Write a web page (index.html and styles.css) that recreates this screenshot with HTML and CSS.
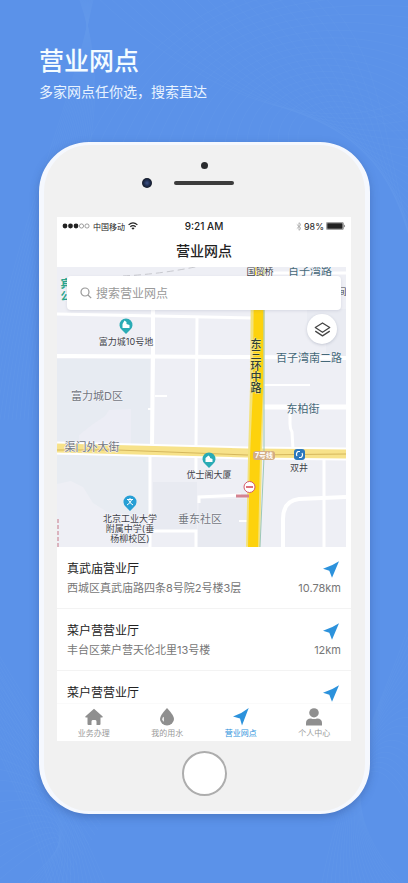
FILE: index.html
```html
<!DOCTYPE html>
<html lang="zh-CN">
<head>
  <meta charset="UTF-8">
  <meta name="viewport" content="width=device-width, initial-scale=1.0">
  <title>营业网点</title>
  <link rel="stylesheet" href="styles.css">
</head>
<body>
  <svg class="backdrop" viewBox="0 0 408 883" preserveAspectRatio="xMidYMid slice" aria-hidden="true">
    <g id="backdrop-lines"></g>
  </svg>

  <main class="hero-section">
    <h1 class="hero-title">营业网点</h1>
    <p class="hero-description">多家网点任你选，搜索直达</p>

    <div class="phone">
      <div class="phone-top">
        <span class="phone-sensor"></span>
        <span class="phone-camera"></span>
        <span class="phone-speaker"></span>
      </div>

      <div class="screen">
        <div class="status-bar">
          <div class="status-left">
            <svg width="28" height="6" viewBox="0 0 28 6">
              <g fill="#222"><circle cx="3" cy="3" r="2.4"/><circle cx="8.5" cy="3" r="2.4"/><circle cx="14" cy="3" r="2.4"/></g>
              <g fill="none" stroke="#777" stroke-width=".7"><circle cx="19.5" cy="3" r="2.1"/><circle cx="25" cy="3" r="2.1"/></g>
            </svg>
            <span class="carrier">中国移动</span>
            <svg width="10" height="8" viewBox="0 0 10 8" fill="none" stroke="#222" stroke-width="1.2">
              <path d="M.6 2.9Q5-1.2 9.4 2.9M2.3 4.8Q5 2.3 7.7 4.8"/>
              <path d="M5 7.8 3.4 6.1Q5 4.8 6.6 6.1z" fill="#222" stroke="none"/>
            </svg>
          </div>
          <span class="status-time">9:21 AM</span>
          <div class="status-right">
            <svg width="6" height="9" viewBox="0 0 6 9" fill="none" stroke="#999" stroke-width=".7">
              <path d="M.8 2.4 5 6.4 3 8.3V.7L5 2.6.8 6.6"/>
            </svg>
            <span>98%</span>
            <svg width="20" height="8" viewBox="0 0 20 8">
              <rect x=".4" y=".4" width="17" height="7.2" rx="1" fill="none" stroke="#555" stroke-width=".6"/>
              <rect x="1.2" y="1.2" width="15.4" height="5.6" fill="#222"/>
              <path d="M18.4 2.6q1.4 1.4 0 2.8z" fill="#222"/>
            </svg>
          </div>
        </div>

        <h2 class="screen-title">营业网点</h2>

        <div class="map">
          <svg class="map-canvas" viewBox="0 0 289 280" preserveAspectRatio="xMidYMid slice">
            <!-- blocks -->
            <rect width="289" height="280" fill="#eeeff5"/>
            <path d="M0 92h93v87H0z" fill="#e7ebf2"/>
            <path d="M22 168l14-11 12-8 4-6 22-1v36H22z" fill="#ecedf5"/>
            <path d="M0 188h92v60l-40-2-16-10-10-16-12-6-14 3z" fill="#e8ecf2"/>
            <path d="M96 215h44v48H96zM142 232h48v48h-50z" fill="#e8eaf1"/>
            <path d="M250 42h39v48h-20V60h-19z" fill="#e9ebf2"/>

            <!-- small roads -->
            <g fill="none" stroke="#fff" stroke-width="3">
              <path d="M0 47 196 51"/>
              <path d="M0 89 196 90 289 91" stroke-width="4"/>
              <path d="M96 40v50l-1 90" stroke-width="4"/>
              <path d="M93 186v94M140 50l-1 130v30"/>
              <path d="M98 129h12M91 142h5M206 118h47M182 254h9" stroke-width="2"/>
              <path d="M206 140h83" stroke-width="5"/>
              <path d="M233 143v14q0 5 2 8l1 18"/>
              <path d="M226 280v-28q0-18 16-20l47-2" stroke-width="4"/>
              <path d="M267 191v89M142 236v-6l42-2M93 264h46v16"/>
              <path d="M206 6h83"/>
            </g>
            <path d="M66 9Q105 7 143-1" fill="none" stroke="#c8c9cf" stroke-dasharray="7 4"/>

            <!-- main street -->
            <path d="M0 181 190 186 289 187" fill="none" stroke="#fff" stroke-width="13"/>
            <path d="M0 181 190 186 289 187" fill="none" stroke="#f7e28a" stroke-width="9"/>
            <path d="M0 183 60 183 190 188 289 187" fill="none" stroke="#d5b75d" stroke-width="1"/>

            <!-- ring road -->
            <path d="M201 0 200 120 198 190 196 280" fill="none" stroke="#f3e27d" stroke-width="14"/>
            <path d="M202 0 201 120 198 190 196 280" fill="none" stroke="#fdd20d" stroke-width="10"/>
            <path d="M207 0v190l-4 90" fill="none" stroke="#9cc7b8" stroke-width="1"/>

            <path d="M179 229h13" stroke="#d58391" stroke-width="3"/>
            <path d="M1 252v28" stroke="#c77886" stroke-dasharray="4 2"/>

            <!-- markers -->
            <g fill="#2aabb5">
              <path d="M69 67l-4-4a6.500 6.500 0 1 1 8 0z"/>
              <path d="M152 201l-4-4a6.500 6.500 0 1 1 8 0z"/>
            </g>
            <path d="M73 244l-4-4a6.500 6.500 0 1 1 8 0z" fill="#279fd5"/>
            <g fill="#fff">
              <path d="M65.500 61v-4l2-3.500 2 1.500v2l3 1v3z"/>
              <path d="M148.500 195v-4l3-2.500 1.500 1.500v1l2.500 1v3z"/>
            </g>
            <path d="M70 232.500h6M73 231v1.500M71.500 233q1 3 4.500 5M74.500 233q-1 3-4.500 5" fill="none" stroke="#fff"/>
            <circle cx="192.500" cy="220" r="5.500" fill="#fff" stroke="#d35a6a"/>
            <path d="M189 220h7" stroke="#d33f50" stroke-width="1.500"/>
            <rect x="196" y="184" width="22" height="9" rx="3" fill="#d3ad83"/>
            <rect x="237" y="182" width="11" height="11" rx="3" fill="#2c78bd"/>
            <path d="M240 189a3.200 3.200 0 0 1 1-4.500h2M245 186a3.200 3.200 0 0 1-1 4.500h-2" fill="none" stroke="#fff" stroke-width="1.200"/>

            <!-- labels -->
            <g class="map-label map-road">
              <text x="253" y="8">百子湾路</text>
              <text x="252" y="95">百子湾南二路</text>
              <text x="246" y="146">东柏街</text>
            </g>
            <g class="map-label map-place">
              <text x="203" y="8">国贸桥</text>
              <text x="69" y="78">富力城10号地</text>
              <text x="152" y="211">优士阁大厦</text>
              <text x="242" y="204">双井</text>
              <text x="73" y="255">北京工业大学</text>
              <text x="73" y="265">附属中学(垂</text>
              <text x="73" y="275">杨柳校区)</text>
              <text x="285" y="28">间</text>
            </g>
            <g class="map-label map-area">
              <text x="40" y="133">富力城D区</text>
              <text x="35" y="184">渠门外大街</text>
              <text x="143" y="256">垂东社区</text>
            </g>
            <text class="map-label map-ring" x="198" y="99">东三环中路</text>
            <g class="map-label map-green">
              <text x="9" y="21">宾</text>
              <text x="9" y="33">公</text>
            </g>
            <text class="map-label map-line" x="207" y="191">7号线</text>
          </svg>

          <label class="search-box">
            <svg width="12" height="12" viewBox="0 0 12 12" fill="none" stroke="#999" stroke-width="1.200">
              <circle cx="5" cy="5" r="4"/><path d="M8 8l3.200 3.200"/>
            </svg>
            <input type="search" placeholder="搜索营业网点" aria-label="搜索营业网点">
          </label>
          <button class="layer-btn" type="button" aria-label="图层">
            <svg width="17" height="15" viewBox="0 0 16 14" fill="none" stroke="#444" stroke-width="1.200" stroke-linejoin="round">
              <path d="M8 .8 14.800 5.200 8 9.600 1.200 5.200z"/><path d="M1.200 8.500 8 13l6.800-4.500"/>
            </svg>
          </button>
        </div>

        <ul class="branch-list">
          <li class="branch">
            <h3>真武庙营业厅</h3>
            <a href="#route-1" aria-label="导航"><svg class="nav-arrow" viewBox="0 0 16 17"><path d="M16 .3 9 16.700 6.300 9.800 0 7.800Q9 5 16 .3z"/></svg></a>
            <p>西城区真武庙路四条8号院2号楼3层</p>
            <span class="distance">10.78km</span>
          </li>
          <li class="branch">
            <h3>菜户营营业厅</h3>
            <a href="#route-2" aria-label="导航"><svg class="nav-arrow" viewBox="0 0 16 17"><path d="M16 .3 9 16.700 6.300 9.800 0 7.800Q9 5 16 .3z"/></svg></a>
            <p>丰台区莱户营天伦北里13号楼</p>
            <span class="distance">12km</span>
          </li>
          <li class="branch">
            <h3>菜户营营业厅</h3>
            <a href="#route-3" aria-label="导航"><svg class="nav-arrow" viewBox="0 0 16 17"><path d="M16 .3 9 16.700 6.300 9.800 0 7.800Q9 5 16 .3z"/></svg></a>
          </li>
        </ul>

        <nav class="tab-bar">
          <a href="#business">
            <svg viewBox="0 0 18 18"><path d="M9 .8 17.700 8.600q.3.900-.7.900h-1.500V16q0 1-1 1h-3v-3.500q0-1.500-1.200-1.500H7.700q-1.200 0-1.200 1.500V17h-3q-1 0-1-1V9.500H1q-1 0-.7-.9z"/></svg>
            <span>业务办理</span>
          </a>
          <a href="#water">
            <svg viewBox="0 0 18 18"><path d="M9 0q7 7.500 7 11a7 6.500 0 0 1-14 0Q2 7.500 9 0z"/><path d="M5.800 8.800q-1.700.5-1.500 2.700.2 1.500 1.500 2.200z" fill="#fff"/></svg>
            <span>我的用水</span>
          </a>
          <a href="#branches" class="active">
            <svg viewBox="0 0 18 18"><path d="M16.700 0 10 17.600 8 10.500 1 8.500Q10 5.500 16.700 0z"/></svg>
            <span>营业网点</span>
          </a>
          <a href="#profile">
            <svg viewBox="0 0 18 18"><ellipse cx="9" cy="4.800" rx="4.800" ry="4.600"/><path d="M1 17.400v-2.400Q1 10.400 6 10.400q3 1.300 6 0 5 0 5 4.600v2.400z"/></svg>
            <span>个人中心</span>
          </a>
        </nav>
      </div>

      <button class="home-btn" type="button" aria-label="主屏幕"></button>
    </div>
  </main>

  <script>
    // Thin woven curves behind the phone
    let lines = '';
    for (let i = 0; i < 20; i++) {
      const a = i * 12;
      lines += `<path d="M${95 - i} -10C${70 + i * 3} 120,${20 + i * 2} 200,${i * 4 - 20} 420"/>`;
      lines += `<path d="M${90 + a} -10C${160 + a} 60,${300 + a / 3} ${160 - i * 2},430 ${90 + a}"/>`;
      lines += `<path d="M${80 + a} 160C${150 + a / 2} ${a / 2},${260 + a / 2} ${a / 3 - 20},430 ${a - 40}"/>`;
      lines += `<path d="M-10 ${660 + a}C${30 + i} ${720 + i * 6},${60 + i * 2} ${780 + i * 2},${110 - i * 5} 893"/>`;
      lines += `<path d="M-10 ${640 + i * 5}Q${60 - i} ${760 + i * 4},${110 - i * 3} ${810 + i * 5}"/>`;
      lines += `<path d="M418 ${600 + a}C${385 - i} 700,${340 - i} ${780 + i * 2},${320 + i * 5} 893"/>`;
    }
    document.getElementById('backdrop-lines').innerHTML = lines;
  </script>
</body>
</html>
```
FILE: styles.css
```css
* {
  box-sizing: border-box;
}
body {
  font-family: Inter, "Noto Sans CJK SC", sans-serif;
  margin: 0;
  min-height: 100vh;
  background: #5b92e9;
  position: relative;
  overflow-x: hidden;
}
h1, h2, h3, p, ul {
  margin: 0;
  padding: 0;
  font-weight: 400;
}
svg {
  display: block;
  flex: none;
}
a {
  color: inherit;
  text-decoration: none;
}

.backdrop {
  position: absolute;
  top: 0;
  left: 0;
  width: 100%;
  height: 100%;
  fill: none;
  stroke: #8bbcf5;
  stroke-width: 0.5;
  opacity: 0.15;
}

.hero-section {
  position: relative;
  max-width: 480px;
  margin: 0 auto;
  padding: 42px 38px 68px 39px;
}
.hero-title {
  color: #f4fcff;
  font-size: 25px;
  font-weight: 500;
  line-height: 38px;
}
.hero-description {
  color: #e8f3ff;
  font-size: 14px;
  line-height: 24px;
}

/* Phone */
.phone {
  margin-top: 38px;
  padding: 0 14px 15px 13px;
  background: #f1f1f1;
  border: 5px solid #f5f8fe;
  border-top-width: 3px;
  border-bottom-width: 3px;
  border-radius: 50px;
  box-shadow: 0 3px 8px rgba(40, 70, 130, 0.35);
}
.phone-top {
  display: grid;
  grid-template-columns: 1fr 60px 1fr;
  grid-template-rows: 26px 30px;
  align-items: center;
  height: 72px;
  padding-top: 7px;
  align-content: start;
}
.phone-sensor {
  grid-column: 2;
  justify-self: center;
  width: 7px;
  height: 7px;
  border-radius: 50%;
  background: #292b2e;
}
.phone-camera {
  grid-column: 1;
  grid-row: 2;
  justify-self: end;
  width: 10px;
  height: 10px;
  margin: 0 22px 20px 0;
  border-radius: 50%;
  background: radial-gradient(#3d5287 0, #1d2a49 45%, #141a26 70%);
}
.phone-speaker {
  grid-column: 2;
  grid-row: 2;
  height: 4px;
  margin-bottom: 20px;
  border-radius: 2px;
  background: #3c3c3c;
}
.screen {
  background: #fff;
}
.home-btn {
  display: block;
  width: 45px;
  height: 45px;
  margin: 10px auto 0;
  padding: 0;
  border: 2px solid #adadad;
  border-radius: 50%;
  background: #fff;
}

/* Status bar */
.status-bar {
  display: grid;
  grid-template-columns: 1fr auto 1fr;
  align-items: center;
  height: 18px;
  padding: 0 5px;
  color: #222;
  font-size: 9px;
}
.status-left,
.status-right {
  display: flex;
  align-items: center;
  gap: 3px;
}
.status-right {
  justify-content: flex-end;
  gap: 2px;
}
.status-time {
  font-size: 10px;
  font-weight: 500;
}
.carrier {
  font-size: 8px;
}
.screen-title {
  color: #222;
  font-size: 14px;
  font-weight: 500;
  line-height: 32px;
  text-align: center;
}

/* Map */
.map {
  position: relative;
  margin-right: 5px;
}
.map-canvas {
  width: 100%;
  height: 280px;
}
.map-label {
  font-size: 9px;
  text-anchor: middle;
  fill: #3e4148;
  stroke: #f4f5f9;
  stroke-width: 1px;
  paint-order: stroke;
}
.map-road {
  font-size: 11px;
  fill: #456878;
}
.map-area {
  font-size: 11px;
  fill: #72767e;
}
.map-ring {
  font-size: 11px;
  font-weight: 500;
  writing-mode: vertical-rl;
  fill: #2f4034;
  stroke: #f7e98f;
}
.map-green {
  font-size: 11px;
  font-weight: 700;
  fill: #2da58d;
}
.map-line {
  font-size: 7px;
  font-weight: 700;
  fill: #fff;
  stroke: none;
}
.search-box {
  position: absolute;
  top: 9px;
  left: 10px;
  right: 5px;
  display: flex;
  align-items: center;
  gap: 4px;
  height: 34px;
  padding: 0 13px;
  background: #fff;
  border-radius: 4px;
  box-shadow: 0 1px 3px rgba(80, 90, 120, 0.15);
}
.search-box input {
  flex: 1;
  min-width: 0;
  padding: 0;
  border: 0;
  outline: 0;
  background: none;
  font: inherit;
  font-size: 12px;
}
.search-box input::placeholder {
  color: #999;
}
.layer-btn {
  position: absolute;
  top: 47px;
  right: 9px;
  display: flex;
  align-items: center;
  justify-content: center;
  width: 30px;
  height: 30px;
  padding: 0;
  border: 0;
  border-radius: 50%;
  background: #fff;
  box-shadow: 0 1px 3px rgba(80, 90, 120, 0.25);
}

/* Branch list */
.branch-list {
  list-style: none;
}
.branch {
  display: grid;
  grid-template-columns: 1fr auto;
  align-items: center;
  padding: 12px 10px 11px;
  border-bottom: 1px solid #f3f3f3;
}
.branch:last-child {
  padding-bottom: 0;
  border-bottom-color: #fafafa;
}
.branch h3 {
  color: #222;
  font-size: 12px;
  line-height: 20px;
}
.branch a {
  justify-self: end;
  margin-right: 2px;
}
.branch p,
.distance {
  color: #777;
  font-size: 11px;
  line-height: 18px;
}
.distance {
  text-align: right;
}
.nav-arrow {
  width: 16px;
  height: 17px;
  fill: #2c92dc;
}

/* Tab bar */
.tab-bar {
  display: grid;
  grid-template-columns: repeat(4, 1fr);
  padding: 4px 0 0;
}
.tab-bar a {
  display: flex;
  flex-direction: column;
  align-items: center;
  color: #999;
  fill: #8f8f8f;
  font-size: 8px;
  line-height: 15px;
}
.tab-bar svg {
  width: 18px;
  height: 18px;
}
.tab-bar a.active {
  color: #2c92dc;
  fill: #2c92dc;
}
```
